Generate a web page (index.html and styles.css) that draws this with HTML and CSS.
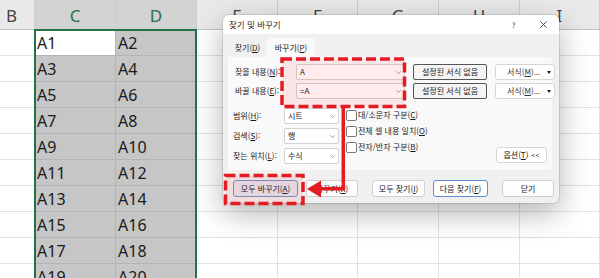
FILE: index.html
```html
<!DOCTYPE html>
<html lang="ko">
<head>
<meta charset="utf-8">
<title>찾기 및 바꾸기</title>
<link rel="stylesheet" href="styles.css">
</head>
<body>
<div class="sheet">
  <div class="h b">B</div><div class="h sel">C</div><div class="h sel">D</div><div class="h">E</div><div class="h">F</div><div class="h">G</div><div class="h">H</div><div class="h">I</div>

  <div class="c"></div><div class="c s a">A1</div><div class="c s">A2</div><div class="c"></div><div class="c"></div><div class="c"></div><div class="c"></div><div class="c"></div>
  <div class="c"></div><div class="c s">A3</div><div class="c s">A4</div><div class="c"></div><div class="c"></div><div class="c"></div><div class="c"></div><div class="c"></div>
  <div class="c"></div><div class="c s">A5</div><div class="c s">A6</div><div class="c"></div><div class="c"></div><div class="c"></div><div class="c"></div><div class="c"></div>
  <div class="c"></div><div class="c s">A7</div><div class="c s">A8</div><div class="c"></div><div class="c"></div><div class="c"></div><div class="c"></div><div class="c"></div>
  <div class="c"></div><div class="c s">A9</div><div class="c s">A10</div><div class="c"></div><div class="c"></div><div class="c"></div><div class="c"></div><div class="c"></div>
  <div class="c"></div><div class="c s">A11</div><div class="c s">A12</div><div class="c"></div><div class="c"></div><div class="c"></div><div class="c"></div><div class="c"></div>
  <div class="c"></div><div class="c s">A13</div><div class="c s">A14</div><div class="c"></div><div class="c"></div><div class="c"></div><div class="c"></div><div class="c"></div>
  <div class="c"></div><div class="c s">A15</div><div class="c s">A16</div><div class="c"></div><div class="c"></div><div class="c"></div><div class="c"></div><div class="c"></div>
  <div class="c"></div><div class="c s">A17</div><div class="c s">A18</div><div class="c"></div><div class="c"></div><div class="c"></div><div class="c"></div><div class="c"></div>
  <div class="c"></div><div class="c s">A19</div><div class="c s">A20</div><div class="c"></div><div class="c"></div><div class="c"></div><div class="c"></div><div class="c"></div>
</div>
<div class="selbox"></div>

<div class="dialog">
  <div class="titlebar">
    <span class="title">찾기 및 바꾸기</span>
    <span class="help">?</span>
    <svg class="close" width="7" height="7" viewBox="0 0 7 7"><path d="M0.5 0.5 L6.5 6.5 M6.5 0.5 L0.5 6.5" stroke="#333" stroke-width="0.9" fill="none"/></svg>
  </div>
  <div class="body">
    <div class="tabs">
      <div class="tab">찾기(<u>D</u>)</div>
      <div class="tab on">바꾸기(<u>P</u>)</div>
    </div>
    <div class="panel">
      <div class="fields">
        <div class="lbl">찾을 내용(<u>N</u>):</div>
        <div class="combo"><span class="v">A</span><svg class="chev" width="5" height="3" viewBox="0 0 5 3"><path d="M0.3 0.3 L2.5 2.6 L4.7 0.3" stroke="#8a8a8a" stroke-width="0.8" fill="none"/></svg></div>
        <div class="btn fmt">설정된 서식 없음</div>
        <div class="btn menu"><span>서식(<u>M</u>)...</span><span class="tri"></span></div>

        <div class="lbl">바꿀 내용(<u>E</u>):</div>
        <div class="combo"><span class="v">=A</span><svg class="chev" width="5" height="3" viewBox="0 0 5 3"><path d="M0.3 0.3 L2.5 2.6 L4.7 0.3" stroke="#8a8a8a" stroke-width="0.8" fill="none"/></svg></div>
        <div class="btn fmt">설정된 서식 없음</div>
        <div class="btn menu"><span>서식(<u>M</u>)...</span><span class="tri"></span></div>
      </div>
      <div class="lower">
        <div class="scope">
          <div class="lbl">범위(<u>H</u>):</div>
          <div class="combo sel"><span class="v">시트</span><svg class="chev" width="5" height="3" viewBox="0 0 5 3"><path d="M0.3 0.3 L2.5 2.6 L4.7 0.3" stroke="#8a8a8a" stroke-width="0.8" fill="none"/></svg></div>
          <div class="lbl">검색(<u>S</u>):</div>
          <div class="combo sel"><span class="v">행</span><svg class="chev" width="5" height="3" viewBox="0 0 5 3"><path d="M0.3 0.3 L2.5 2.6 L4.7 0.3" stroke="#8a8a8a" stroke-width="0.8" fill="none"/></svg></div>
          <div class="lbl">찾는 위치(<u>L</u>):</div>
          <div class="combo sel"><span class="v">수식</span><svg class="chev" width="5" height="3" viewBox="0 0 5 3"><path d="M0.3 0.3 L2.5 2.6 L4.7 0.3" stroke="#8a8a8a" stroke-width="0.8" fill="none"/></svg></div>
        </div>
        <div class="checks">
          <div class="check"><span class="box"></span>대/소문자 구분(<u>C</u>)</div>
          <div class="check"><span class="box"></span>전체 셀 내용 일치(<u>O</u>)</div>
          <div class="check"><span class="box"></span>전자/반자 구분(<u>B</u>)</div>
        </div>
        <div class="btn opt">옵션(<u>T</u>) <span class="ll">&lt;&lt;</span></div>
      </div>
    </div>
    <div class="actions">
      <div class="btn act b1">모두 바꾸기(<u>A</u>)</div>
      <div class="btn act b2">바꾸기(<u>R</u>)</div>
      <div class="btn act b3">모두 찾기(<u>I</u>)</div>
      <div class="btn act b4">다음 찾기(<u>F</u>)</div>
      <div class="btn act b5">닫기</div>
    </div>
  </div>
</div>

<svg class="marks" width="600" height="278" viewBox="0 0 600 278">
  <rect x="282" y="59" width="122.5" height="47.5" fill="rgba(255,0,0,0.08)" stroke="#e41b23" stroke-width="3.5" stroke-dasharray="10 4"/>
  <rect x="225.5" y="175.5" width="77.5" height="28" fill="rgba(255,0,0,0.08)" stroke="#e41b23" stroke-width="3.5" stroke-dasharray="10 4"/>
  <polyline points="343.3,105 343.3,188.7 319,188.7" fill="none" stroke="#e41b23" stroke-width="3.5"/>
  <polygon points="307,189 321,180.5 321,197.5" fill="#e41b23"/>
</svg>
</body>
</html>
```

FILE: styles.css
```css
* { box-sizing: border-box; }
html, body { margin: 0; padding: 0; }
body {
  width: 600px;
  height: 278px;
  overflow: hidden;
  position: relative;
  background: #ffffff;
  font-family: "Noto Sans", "Liberation Sans", sans-serif;
}

/* spreadsheet */
.sheet {
  display: grid;
  grid-template-columns: 35px 81px 81px 81px 80px 81px 81px 80px;
  grid-template-rows: 30px;
  grid-auto-rows: 26px;
}
.h {
  background: #e9e9e9;
  border-right: 1px solid #cdcdcd;
  border-bottom: 1px solid #c3c3c3;
  font-size: 17px;
  color: #444;
  display: flex;
  align-items: center;
  justify-content: center;
  line-height: 1;
  padding-top: 1px;
}
.h.b { justify-content: flex-start; padding-left: 6px; }
.h.sel { background: #d2d2d2; color: #217346; }
.c {
  border-right: 1px solid #e1e1e1;
  border-bottom: 1px solid #e1e1e1;
  font-size: 16px;
  color: #1b1b1b;
  padding-left: 2px;
  display: flex;
  align-items: center;
  line-height: 1;
}
.c.s { background: #c6c6c6; border-color: #b4b4b4; }
.c.a { background: #ffffff; }

.selbox {
  position: absolute;
  left: 34px;
  top: 29px;
  width: 163px;
  height: 260px;
  border: 2px solid #217346;
}

/* dialog */
.dialog {
  position: absolute;
  left: 223px;
  top: 15px;
  width: 336px;
  height: 188px;
  border-radius: 6px;
  background: #f0f0f0;
  box-shadow: 0 10px 30px rgba(0,0,0,0.30), 0 0 0 1px rgba(0,0,0,0.10);
  overflow: hidden;
  font-family: "Noto Sans CJK KR", "Noto Sans", sans-serif;
  font-size: 8px;
  color: #1a1a1a;
  line-height: 1;
}
.titlebar {
  height: 19px;
  background: #ffffff;
  display: flex;
  align-items: center;
  padding-left: 6px;
  padding-right: 12px;
}
.title { flex: 1; font-size: 8.5px; color: #222; }
.help { width: 6px; text-align: center; font-size: 7.5px; color: #333; }
.close { margin-left: 23.5px; display: block; }

.body { padding: 4px 7px 6px 5px; }
.tabs { display: flex; height: 19px; }
.tab {
  width: 39px;
  display: flex;
  align-items: center;
  justify-content: center;
}
.tab.on { width: 48px; background: #f9f9f9; border-radius: 3px 3px 0 0; }

.panel {
  height: 113px;
  background: #f9f9f9;
  padding: 7px 5px 6px 7px;
  border-radius: 0 3px 3px 3px;
}
.fields {
  display: grid;
  grid-template-columns: 53px 109px 74px 60px;
  column-gap: 8px;
  row-gap: 3px;
  grid-auto-rows: 16px;
  align-items: center;
}
.lbl { white-space: nowrap; }
.combo {
  height: 16px;
  background: #ffffff;
  border: 1px solid #d3d3d3;
  border-radius: 2px;
  display: flex;
  align-items: center;
  padding-left: 3px;
}
.combo .v { flex: 1; }
.chev { display: block; margin-right: 3.5px; }

.btn {
  height: 16px;
  border-radius: 3px;
  display: flex;
  align-items: center;
  justify-content: center;
  white-space: nowrap;
}
.fmt { background: #f4f4f4; border: 1px solid #555; border-radius: 2px; color: #222; }
.menu {
  background: #ffffff;
  border: 1px solid #d6d6d6;
  justify-content: space-between;
  padding-left: 11px;
  padding-right: 3px;
  color: #333;
}
.tri {
  width: 0;
  height: 0;
  border-left: 2.5px solid transparent;
  border-right: 2.5px solid transparent;
  border-top: 3px solid #222;
}

.lower {
  display: flex;
  margin-top: 9px;
  margin-left: -2px;
  height: 56px;
}
.scope {
  display: grid;
  grid-template-columns: 51px 55px;
  row-gap: 4px;
  grid-auto-rows: 16px;
  align-items: center;
}
.checks {
  margin-left: 7px;
  margin-top: -1px;
  display: grid;
  grid-auto-rows: 16px;
  align-items: center;
}
.check { display: flex; align-items: center; white-space: nowrap; }
.box {
  width: 11px;
  height: 11px;
  border: 1px solid #7a7a7a;
  border-radius: 2px;
  background: #ffffff;
  margin-right: 1px;
}
.opt {
  margin-left: auto;
  align-self: flex-end;
  margin-bottom: 1px;
  width: 51px;
  background: #ffffff;
  border: 1px solid #d6d6d6;
}
.ll { font-size: 6.5px; margin-left: 3px; letter-spacing: 0.5px; }

.actions { display: flex; margin-top: 10px; height: 17px; }
.act {
  flex-shrink: 0;
  height: 17px;
  background: #fdfdfd;
  border: 1px solid #d0d0d0;
}
.b1 { margin-left: 5px; width: 65px; background: #e2e9f2; border-color: #6f95c8; }
.b2 { margin-left: 8px; width: 52px; }
.b3 { margin-left: 14px; width: 53px; }
.b4 { margin-left: 8px; width: 55px; background: #ffffff; border-color: #5b8fd0; }
.b5 { margin-left: 14px; width: 52px; }

/* annotations */
.marks { position: absolute; left: 0; top: 0; }
```
